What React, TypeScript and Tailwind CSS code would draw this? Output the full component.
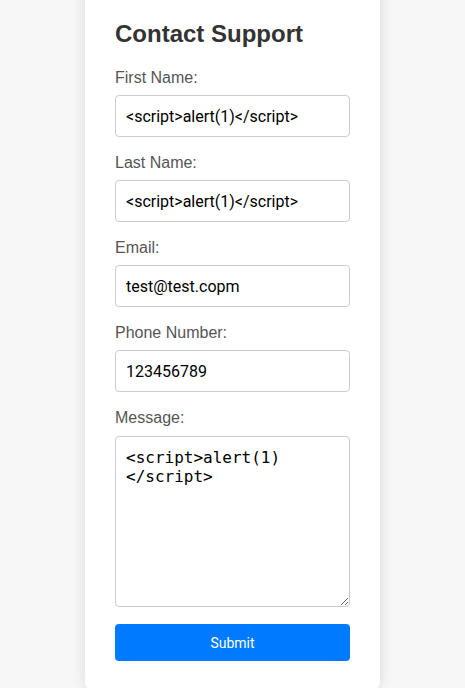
import React from "react";

const label = "block text-[16px] leading-[20px] text-[#555] font-['Liberation_Sans',Arial,sans-serif]";
const input =
  "block w-full h-[42px] px-[10px] border border-[#ccc] rounded-[4px] bg-white text-[16px] text-black font-['Roboto',sans-serif] outline-none";

function Field({ name, value }: { name: string; value: string }) {
  return (
    <div className="flex flex-col gap-[7px]">
      <label className={label}>{name}</label>
      <input className={input} defaultValue={value} />
    </div>
  );
}

export default function App() {
  return (
    <div className="h-[688px] overflow-hidden bg-[#f7f7f7] flex flex-col items-center justify-end">
      <div className="w-[295px] -mb-[2px] bg-white rounded-[8px] shadow-[0_0_14px_rgba(0,0,0,0.12)] px-[30px] pt-[60px] pb-[29px]">
        <h2 className="text-[24px] leading-[28px] font-bold text-[#333] font-['Liberation_Sans',Arial,sans-serif] mb-[20px]">
          Contact Support
        </h2>
        <div className="flex flex-col gap-[16px]">
          <Field name="First Name:" value="<script>alert(1)</script>" />
          <Field name="Last Name:" value="<script>alert(1)</script>" />
          <Field name="Email:" value="test@test.copm" />
          <Field name="Phone Number:" value="123456789" />
          <div className="flex flex-col gap-[8px]">
            <label className={label}>Message:</label>
            <textarea
              className="block w-full h-[171px] px-[10px] pt-[11px] pb-[9px] border border-[#ccc] rounded-[4px] bg-white text-[16px] leading-[19px] text-black font-['DejaVu_Sans_Mono',monospace] outline-none resize-y"
              defaultValue="<script>alert(1)</script>"
            />
          </div>
        </div>
        <button className="mt-[17px] w-full h-[37px] rounded-[4px] bg-[#007bff] pt-[2px] text-white text-[14px] font-['Roboto',sans-serif]">
          Submit
        </button>
      </div>
    </div>
  );
}
